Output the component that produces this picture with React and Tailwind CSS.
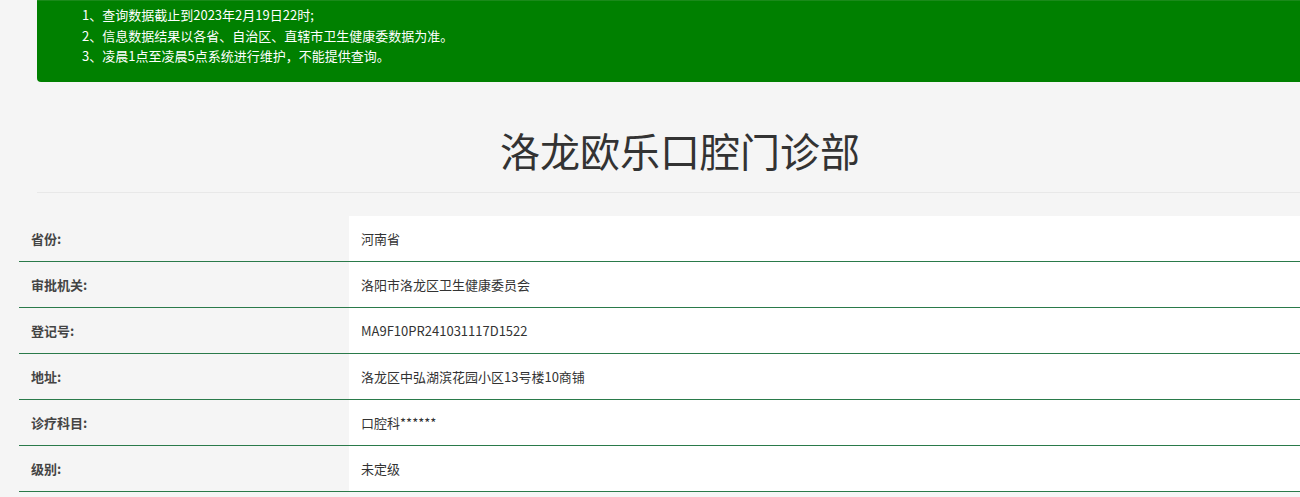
const rows = [
  ['省份:', '河南省'],
  ['审批机关:', '洛阳市洛龙区卫生健康委员会'],
  ['登记号:', 'MA9F10PR241031117D1522'],
  ['地址:', '洛龙区中弘湖滨花园小区13号楼10商铺'],
  ['诊疗科目:', '口腔科******'],
  ['级别:', '未定级'],
];

export default function App() {
  return (
    <div
      className="h-[497px] w-[1300px] overflow-hidden bg-[#f5f5f5] text-[#333]"
      style={{ fontFamily: '"Microsoft YaHei", "Noto Sans CJK SC", sans-serif' }}
    >
      <div className="ml-[37px] w-[1286px]">
        <div className="h-[82px] rounded-bl-[4px] border-t border-[#1a8a1a] bg-[#008000] pl-[45px] pt-[4px] text-[13px] leading-[20.5px] text-white">
          <p>1、查询数据截止到2023年2月19日22时;</p>
          <p>2、信息数据结果以各省、自治区、直辖市卫生健康委数据为准。</p>
          <p>3、凌晨1点至凌晨5点系统进行维护，不能提供查询。</p>
        </div>
        <h1 className="mt-[44px] text-center text-[40px] leading-[48px] text-[#333]">洛龙欧乐口腔门诊部</h1>
        <div className="mt-[18px] border-t border-[#e8e8e8]" />
      </div>
      <div className="ml-[19px] mt-[23px] w-[1300px] text-[13px]">
        {rows.map(([k, v]) => (
          <div key={k} className="flex h-[46px] border-b border-[#2a7a4a]">
            <div className="flex w-[330px] items-center pl-[12px] font-bold text-[#444]">{k}</div>
            <div className="flex flex-1 items-center bg-white pl-[12px] text-[#333]">{v}</div>
          </div>
        ))}
      </div>
    </div>
  );
}
